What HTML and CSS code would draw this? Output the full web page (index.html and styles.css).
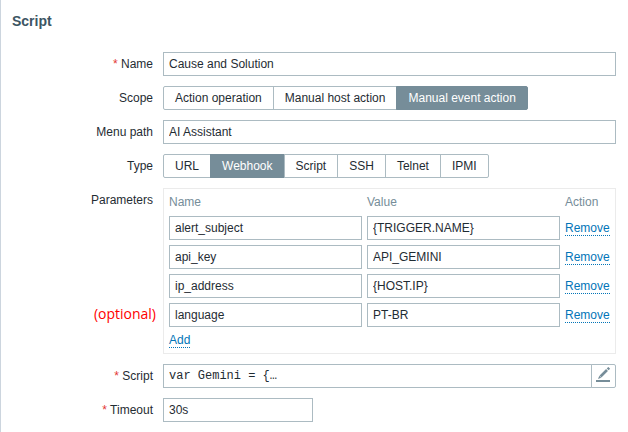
FILE: index.html
```
<!DOCTYPE html>
<html lang="en">
<head>
<meta charset="utf-8">
<title>Script</title>
<link rel="stylesheet" href="styles.css">
</head>
<body>
<main class="panel">
  <h1 class="title">Script</h1>
  <form class="form">
    <label class="label required" for="name">Name</label>
    <input class="input" id="name" type="text" value="Cause and Solution">

    <span class="label" id="scope-label">Scope</span>
    <div class="segments" role="radiogroup" aria-labelledby="scope-label">
      <label class="segment"><input type="radio" name="scope"><span>Action operation</span></label>
      <label class="segment"><input type="radio" name="scope"><span>Manual host action</span></label>
      <label class="segment"><input type="radio" name="scope" checked><span>Manual event action</span></label>
    </div>

    <label class="label" for="menu-path">Menu path</label>
    <input class="input" id="menu-path" type="text" value="AI Assistant">

    <span class="label" id="type-label">Type</span>
    <div class="segments" role="radiogroup" aria-labelledby="type-label">
      <label class="segment"><input type="radio" name="type"><span>URL</span></label>
      <label class="segment"><input type="radio" name="type" checked><span>Webhook</span></label>
      <label class="segment"><input type="radio" name="type"><span>Script</span></label>
      <label class="segment"><input type="radio" name="type"><span>SSH</span></label>
      <label class="segment"><input type="radio" name="type"><span>Telnet</span></label>
      <label class="segment"><input type="radio" name="type"><span>IPMI</span></label>
    </div>

    <div class="label-column">
      <span class="label" id="params-label">Parameters</span>
      <span class="note">(optional)</span>
    </div>
    <div class="frame">
      <table class="params" aria-labelledby="params-label">
        <thead>
          <tr><th>Name</th><th>Value</th><th class="action">Action</th></tr>
        </thead>
        <tbody>
          <tr>
            <td><input class="input" type="text" aria-label="Name" value="alert_subject"></td>
            <td><input class="input" type="text" aria-label="Value" value="{TRIGGER.NAME}"></td>
            <td><button class="link" type="button">Remove</button></td>
          </tr>
          <tr>
            <td><input class="input" type="text" aria-label="Name" value="api_key"></td>
            <td><input class="input" type="text" aria-label="Value" value="API_GEMINI"></td>
            <td><button class="link" type="button">Remove</button></td>
          </tr>
          <tr>
            <td><input class="input" type="text" aria-label="Name" value="ip_address"></td>
            <td><input class="input" type="text" aria-label="Value" value="{HOST.IP}"></td>
            <td><button class="link" type="button">Remove</button></td>
          </tr>
          <tr>
            <td><input class="input" type="text" aria-label="Name" value="language"></td>
            <td><input class="input" type="text" aria-label="Value" value="PT-BR"></td>
            <td><button class="link" type="button">Remove</button></td>
          </tr>
        </tbody>
      </table>
      <button class="link" type="button">Add</button>
    </div>

    <label class="label required" for="script">Script</label>
    <div class="code">
      <input class="input code-input" id="script" type="text" value="var Gemini = {…" readonly>
      <button class="edit" type="button" aria-label="Edit script">
        <svg width="17" height="18" viewBox="0 0 17 18" aria-hidden="true">
          <path d="M1 14H15" stroke="#768d99" stroke-width="2"/>
          <path d="M5.500 9.500L12 3" stroke="#768d99" stroke-width="2.600"/>
          <path d="M12.700 2.300L14.200 .8" stroke="#768d99" stroke-width="2.600"/>
          <path d="M4.300 8.800L6.200 10.700L3 12Z" fill="#768d99"/>
        </svg>
      </button>
    </div>

    <label class="label required" for="timeout">Timeout</label>
    <input class="input short" id="timeout" type="text" value="30s">
  </form>
</main>
</body>
</html>
```
FILE: styles.css
```
* {
  box-sizing: border-box;
}

body {
  margin: 0;
  background: #fff;
  color: #1f2c33;
  font-family: "Liberation Sans", Arial, sans-serif;
  font-size: 12px;
  line-height: 14px;
}

.panel {
  min-height: 100vh;
  padding: 12px 12px 10px 11px;
  border-left: 1px solid #ccd5de;
}

.title {
  margin: 0 0 22px;
  color: #3c5563;
  font-size: 14px;
  line-height: 18px;
}

.form {
  display: grid;
  grid-template-columns: 141px minmax(0, 1fr);
  gap: 10px;
}

.label {
  line-height: 24px;
  text-align: right;
}

.required::before {
  content: "* ";
  color: #e33734;
}

.label-column {
  display: flex;
  flex-direction: column;
}

.note {
  margin: auto -3px 31px 0;
  color: #f00;
  font-family: "Open Sans", sans-serif;
  font-size: 14px;
  line-height: 18px;
  text-align: right;
}

.input {
  width: 100%;
  height: 24px;
  padding: 0 5px;
  border: 1px solid #acbbc2;
  border-radius: 0;
  background: #fff;
  color: inherit;
  font: inherit;
}

.short {
  width: 150px;
}

.segments {
  display: flex;
}

.segment {
  position: relative;
  margin-right: -1px;
}

.segment input {
  position: absolute;
  inset: 0;
  margin: 0;
  opacity: 0;
}

.segment span {
  display: block;
  padding: 0 11px;
  border: 1px solid #acbbc2;
  line-height: 22px;
  white-space: nowrap;
}

.segment:first-child span {
  border-radius: 2px 0 0 2px;
}

.segment:last-child span {
  border-radius: 0 2px 2px 0;
}

.segment input:checked + span {
  position: relative;
  border-color: #768d99;
  background: #768d99;
  color: #fff;
}

.frame {
  padding: 5px;
  border: 1px solid #ebebeb;
}

.params {
  width: 100%;
  border-collapse: collapse;
  table-layout: fixed;
}

.params th {
  padding: 0 5px 5px 0;
  color: #768d99;
  font-weight: normal;
  line-height: 17px;
  text-align: left;
}

.params td {
  padding: 0 5px 5px 0;
}

.params .action {
  width: 45px;
}

.params th:last-child,
.params td:last-child {
  padding-right: 0;
}

.link {
  display: block;
  padding: 0;
  border: 0;
  border-bottom: 1px dotted #0275b8;
  background: none;
  color: #0275b8;
  font: inherit;
  cursor: pointer;
}

.frame > .link {
  margin-top: 1px;
}

.code {
  display: flex;
}

.code-input {
  flex: 1;
  min-width: 0;
  font-family: "Liberation Mono", monospace;
}

.edit {
  display: grid;
  place-items: center;
  width: 25px;
  height: 24px;
  margin-left: -1px;
  padding: 0;
  border: 1px solid #acbbc2;
  border-radius: 0 2px 2px 0;
  background: #fff;
}
```
